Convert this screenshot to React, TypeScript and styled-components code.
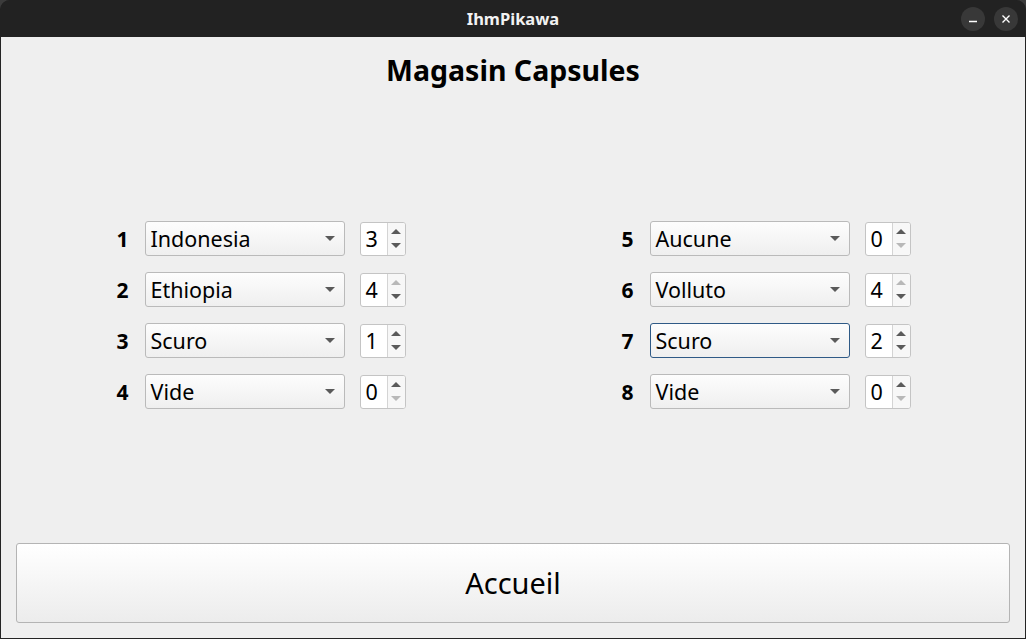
import React, { FC } from 'react';
import styled, { createGlobalStyle } from 'styled-components';

const GlobalStyle = createGlobalStyle`
  html, body {
    margin: 0;
    padding: 0;
    background-color: #3b3b3b;
  }
  #root {
    width: 1026px;
    height: 639px;
  }
  * {
    box-sizing: border-box;
  }
`;

const Window = styled.div`
  width: 1026px;
  height: 639px;
  display: flex;
  flex-direction: column;
  font-family: "Noto Sans", "DejaVu Sans", sans-serif;
  border-radius: 10px 10px 0 0;
  overflow: hidden;
  background-color: #242424;
`;

const TitleBar = styled.div`
  height: 37px;
  flex-shrink: 0;
  display: flex;
  align-items: center;
  justify-content: center;
  position: relative;
  background-color: #222222;
  color: #f2f2f2;
  font-size: 16.5px;
  font-weight: bold;
`;

const WindowButtons = styled.div`
  position: absolute;
  right: 8px;
  top: 7px;
  display: flex;
  gap: 9px;
`;

const WindowButton = styled.div`
  width: 24px;
  height: 24px;
  border-radius: 50%;
  background-color: #383838;
  display: flex;
  align-items: center;
  justify-content: center;
`;

const Body = styled.div`
  flex: 1;
  margin: 0 1px 1px 1px;
  background-color: #efefef;
  display: flex;
  flex-direction: column;
  padding: 0 15px 15px 15px;
`;

const Heading = styled.h1`
  margin: 16px 0 0 0;
  height: 35px;
  line-height: 35px;
  text-align: center;
  font-size: 28.5px;
  font-weight: bold;
  color: #000;
`;

const Columns = styled.div`
  margin-top: 133px;
  display: flex;
  justify-content: center;
  gap: 216px;
  padding-left: 1px;
`;

const Column = styled.div`
  width: 289px;
  display: flex;
  flex-direction: column;
  gap: 16px;
`;

const Row = styled.div`
  height: 35px;
  display: flex;
  align-items: center;
`;

const SlotLabel = styled.span`
  width: 28px;
  font-size: 21px;
  font-weight: bold;
  color: #000;
`;

const Combo = styled.div<{ $focused?: boolean }>`
  width: 200px;
  height: 35px;
  display: flex;
  align-items: center;
  justify-content: space-between;
  padding: 0 9px 0 5px;
  border: 1px solid ${p => (p.$focused ? '#2f5a86' : '#bababa')};
  border-radius: 3px;
  background: linear-gradient(#fdfdfd, #efefef);
  font-size: 21.5px;
  color: #000;
`;

const ComboArrow = styled.span`
  width: 0;
  height: 0;
  border-left: 5px solid transparent;
  border-right: 5px solid transparent;
  border-top: 5px solid #5a5a5a;
`;

const Spin = styled.div`
  margin-left: 15px;
  width: 46px;
  height: 34px;
  display: flex;
  border: 1px solid #c4c4c4;
  border-radius: 3px;
  background-color: #fff;
  overflow: hidden;
`;

const SpinValue = styled.span`
  width: 27px;
  display: flex;
  align-items: center;
  padding-left: 5px;
  font-size: 21.5px;
  color: #000;
  border-right: 1px solid #d4d4d4;
`;

const SpinButtons = styled.div`
  flex: 1;
  display: flex;
  flex-direction: column;
  background-color: #f7f7f7;
`;

const SpinButton = styled.div`
  flex: 1;
  display: flex;
  align-items: center;
  justify-content: center;
`;

const UpArrow = styled.span<{ $disabled?: boolean }>`
  width: 0;
  height: 0;
  border-left: 5px solid transparent;
  border-right: 5px solid transparent;
  border-bottom: 5px solid ${p => (p.$disabled ? '#b8b8b8' : '#5a5a5a')};
  margin-top: 2px;
`;

const DownArrow = styled.span<{ $disabled?: boolean }>`
  width: 0;
  height: 0;
  border-left: 5px solid transparent;
  border-right: 5px solid transparent;
  border-top: 5px solid ${p => (p.$disabled ? '#b8b8b8' : '#5a5a5a')};
  margin-bottom: 2px;
`;

const HomeButton = styled.button`
  margin-top: auto;
  height: 80px;
  width: 100%;
  border: 1px solid #b4b4b4;
  border-radius: 3px;
  background: linear-gradient(#ffffff, #ececec);
  font-family: inherit;
  font-size: 29px;
  color: #000;
  padding-bottom: 2px;
`;

interface ISlot {
  id: number;
  name: string;
  qty: number;
  focused?: boolean;
}

const left: ISlot[] = [
  { id: 1, name: 'Indonesia', qty: 3 },
  { id: 2, name: 'Ethiopia', qty: 4 },
  { id: 3, name: 'Scuro', qty: 1 },
  { id: 4, name: 'Vide', qty: 0 },
];

const right: ISlot[] = [
  { id: 5, name: 'Aucune', qty: 0 },
  { id: 6, name: 'Volluto', qty: 4 },
  { id: 7, name: 'Scuro', qty: 2, focused: true },
  { id: 8, name: 'Vide', qty: 0 },
];

const SlotRow: FC<{ slot: ISlot }> = ({ slot }) => (
  <Row>
    <SlotLabel>{slot.id}</SlotLabel>
    <Combo $focused={slot.focused}>
      {slot.name}
      <ComboArrow />
    </Combo>
    <Spin>
      <SpinValue>{slot.qty}</SpinValue>
      <SpinButtons>
        <SpinButton>
          <UpArrow $disabled={slot.qty >= 4} />
        </SpinButton>
        <SpinButton>
          <DownArrow $disabled={slot.qty <= 0} />
        </SpinButton>
      </SpinButtons>
    </Spin>
  </Row>
);

const App: FC = () => {
  return (
    <>
      <GlobalStyle />
      <Window>
        <TitleBar>
          IhmPikawa
          <WindowButtons>
            <WindowButton>
              <svg width="10" height="10" viewBox="0 0 10 10">
                <line x1="1" y1="7.5" x2="9" y2="7.5" stroke="#fff" strokeWidth="1.4" />
              </svg>
            </WindowButton>
            <WindowButton>
              <svg width="10" height="10" viewBox="0 0 10 10">
                <path d="M1.5 1.5 L8.5 8.5 M8.5 1.5 L1.5 8.5" stroke="#fff" strokeWidth="1.4" />
              </svg>
            </WindowButton>
          </WindowButtons>
        </TitleBar>
        <Body>
          <Heading>Magasin Capsules</Heading>
          <Columns>
            <Column>
              {left.map(s => <SlotRow key={s.id} slot={s} />)}
            </Column>
            <Column>
              {right.map(s => <SlotRow key={s.id} slot={s} />)}
            </Column>
          </Columns>
          <HomeButton>Accueil</HomeButton>
        </Body>
      </Window>
    </>
  );
};

export default App;
